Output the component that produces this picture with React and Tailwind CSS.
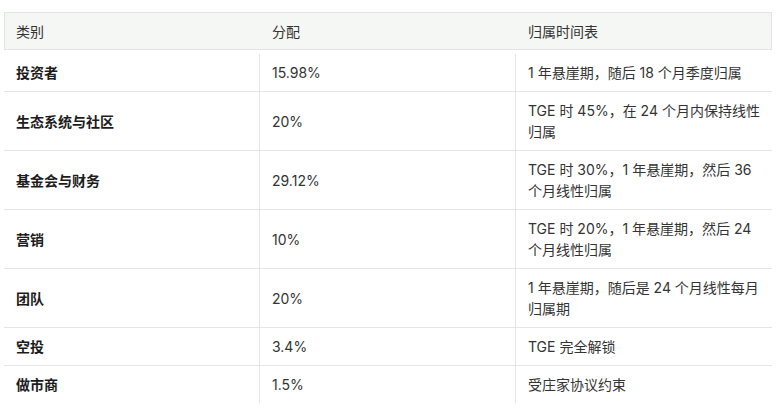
const rows = [
  ["投资者", "15.98%", "1 年悬崖期，随后 18 个月季度归属"],
  ["生态系统与社区", "20%", "TGE 时 45%，在 24 个月内保持线性归属"],
  ["基金会与财务", "29.12%", "TGE 时 30%，1 年悬崖期，然后 36 个月线性归属"],
  ["营销", "10%", "TGE 时 20%，1 年悬崖期，然后 24 个月线性归属"],
  ["团队", "20%", "1 年悬崖期，随后是 24 个月线性每月归属期"],
  ["空投", "3.4%", "TGE 完全解锁"],
  ["做市商", "1.5%", "受庄家协议约束"],
];

export default function App() {
  return (
    <div
      className="bg-white w-[782px] h-[418px] pt-3 pl-1 text-[14px] leading-[21px]"
      style={{ fontFamily: 'Inter, "Noto Sans CJK SC", sans-serif' }}
    >
      <div className="w-[768px]">
        <div className="grid grid-cols-[255px_256px_1fr] h-[38px] items-center border border-[#e2e5e1] bg-[#f5f7f4] text-[#333333]">
          <div className="pl-[11px]">类别</div>
          <div className="pl-3">分配</div>
          <div className="pl-3">归属时间表</div>
        </div>
        <div className="mt-[4px]">
          {rows.map((r, i) => (
            <div
              key={i}
              className={
                "grid grid-cols-[255px_256px_1fr] " +
                (i < rows.length - 1 ? "border-b border-[#e4e6e4]" : "")
              }
            >
              <div className="py-2 pl-3 pr-2 font-bold text-[#1c1c1c] flex items-center">{r[0]}</div>
              <div className="py-2 pl-3 pr-2 border-l border-[#e4e6e4] text-[#333333] flex items-center">{r[1]}</div>
              <div className="py-2 pl-3 pr-2 border-l border-[#e4e6e4] text-[#333333]">{r[2]}</div>
            </div>
          ))}
        </div>
      </div>
    </div>
  );
}
